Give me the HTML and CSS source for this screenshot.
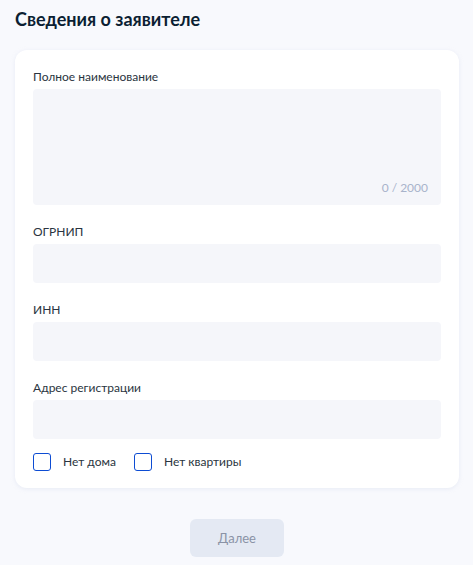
FILE: index.html
```html
<!DOCTYPE html>
<html lang="ru">
<head>
<meta charset="utf-8">
<link rel="stylesheet" href="styles.css">
</head>
<body>
<div class="page">
  <h1 class="title">Сведения о заявителе</h1>
  <div class="card">
    <div class="field">
      <label class="label">Полное наименование</label>
      <div class="textarea"><span class="counter">0 / 2000</span></div>
    </div>
    <div class="field">
      <label class="label">ОГРНИП</label>
      <div class="input"></div>
    </div>
    <div class="field">
      <label class="label">ИНН</label>
      <div class="input"></div>
    </div>
    <div class="field">
      <label class="label">Адрес регистрации</label>
      <div class="input"></div>
    </div>
    <div class="checks">
      <label class="check"><span class="box"></span><span class="check-text">Нет дома</span></label>
      <label class="check"><span class="box"></span><span class="check-text">Нет квартиры</span></label>
    </div>
  </div>
  <div class="actions">
    <button class="btn">Далее</button>
  </div>
</div>
</body>
</html>
```
FILE: styles.css
```css
* { box-sizing: border-box; }
html, body { margin: 0; padding: 0; }
body {
  background: #f8f9fd;
  font-family: Lato, "Noto Sans", sans-serif;
  color: #0b1f33;
  width: 473px;
  height: 565px;
  overflow: hidden;
}
.page {
  padding: 6px 14px 0 15px;
}
.title {
  margin: 0;
  font-size: 18px;
  font-weight: 700;
  line-height: 26px;
  color: #0b1f33;
}
.card {
  margin-top: 18px;
  background: #fff;
  border-radius: 12px;
  box-shadow: 0 1px 4px rgba(200, 208, 228, 0.35);
  padding: 19px 18px 17px 18px;
  display: flex;
  flex-direction: column;
  gap: 19px;
}
.field {
  display: flex;
  flex-direction: column;
  gap: 4px;
}
.label {
  font-size: 12px;
  line-height: 16px;
  color: #2a3440;
}
.textarea {
  height: 116px;
  background: #f5f6fa;
  border-radius: 4px;
  display: flex;
  align-items: flex-end;
  justify-content: flex-end;
  padding: 0 13px 10px 0;
}
.counter {
  font-size: 12px;
  line-height: 14px;
  color: #a8b3cb;
}
.input {
  height: 39px;
  background: #f5f6fa;
  border-radius: 4px;
}
.checks {
  display: flex;
  gap: 18px;
  margin-top: -5px;
}
.check {
  display: flex;
  align-items: center;
  gap: 12px;
}
.box {
  width: 18px;
  height: 18px;
  border: 1.5px solid #0d4cd3;
  border-radius: 3px;
  background: #fff;
}
.check-text {
  font-size: 12px;
  line-height: 18px;
  color: #2a3440;
}
.actions {
  display: flex;
  justify-content: center;
  margin-top: 31px;
}
.btn {
  width: 94px;
  height: 38px;
  border: none;
  border-radius: 6px;
  background: #e4e9f3;
  color: #8a93a6;
  font-family: Lato, "Noto Sans", sans-serif;
  font-size: 13px;
}
```
